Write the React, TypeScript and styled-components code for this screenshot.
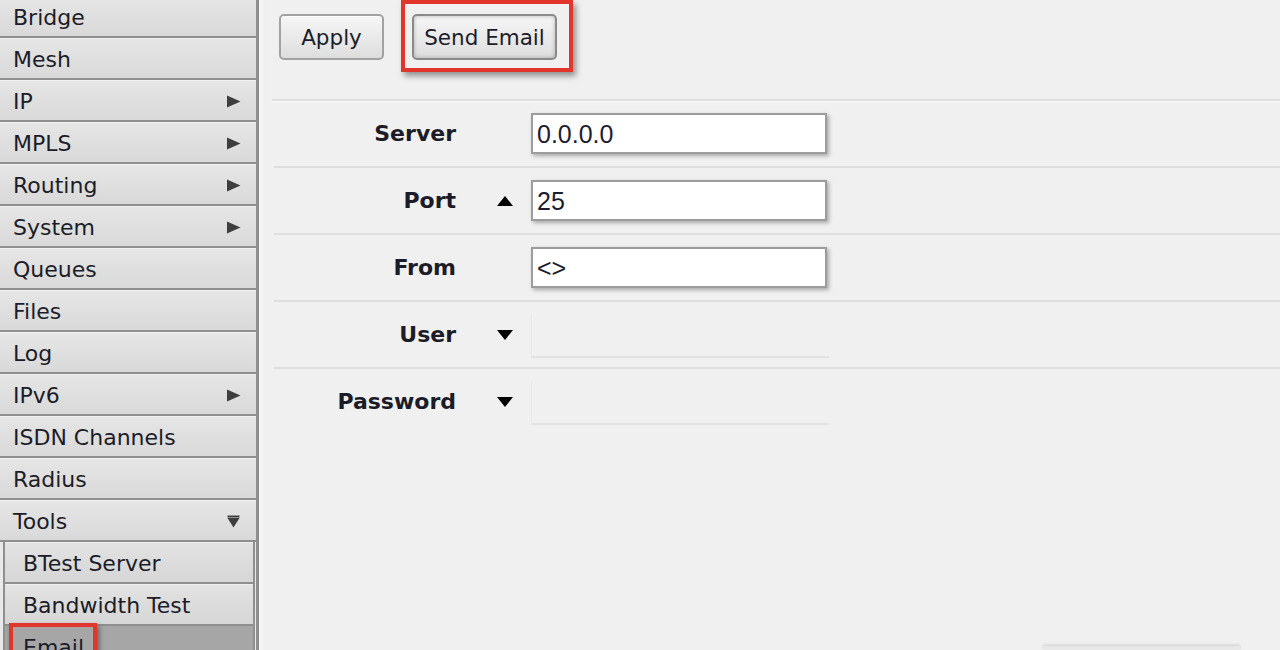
import React from "react";
import styled, { createGlobalStyle } from "styled-components";

const Global = createGlobalStyle`
  html, body { margin: 0; padding: 0; background: #f0f0f0; overflow: hidden; }
  body { font-family: "DejaVu Sans", Verdana, sans-serif; color: #1c1c28; }
`;

const Page = styled.div`
  display: flex;
  width: 1280px;
  height: 650px;
  overflow: hidden;
  background: #f0f0f0;
`;

const Sidebar = styled.nav`
  width: 256px;
  flex: none;
  border-right: 3px solid #8e8e8e;
  background: #e9e9e9;
  display: flex;
  flex-direction: column;
  margin-top: -4px;
`;

const MenuItem = styled.div`
  position: relative;
  height: 42px;
  box-sizing: border-box;
  padding: 3px 15px 0 13px;
  border-bottom: 2px solid #8f8f8f;
  background: linear-gradient(#e6e6e6, #d9d9d9);
  box-shadow: inset 0 1px 0 #f2f2f2;
  display: flex;
  align-items: center;
  justify-content: space-between;
  font-size: 22px;
  line-height: 1;
  flex: none;
  white-space: nowrap;
`;

const SubMenu = styled.div`
  margin: 0 1px 0 3px;
  border-left: 2px solid #8f8f8f;
  border-right: 2px solid #8f8f8f;
  display: flex;
  flex-direction: column;
`;

const SubItem = styled(MenuItem)<{ $active?: boolean }>`
  padding-left: 18px;
  background: ${(p) => (p.$active ? "#a6a6a6" : "linear-gradient(#e3e3e3, #d6d6d6)")};
  box-shadow: ${(p) => (p.$active ? "none" : "inset 0 1px 0 #efefef")};
`;

const Highlight = styled.span`
  position: absolute;
  left: 4px;
  top: -3px;
  width: 80px;
  height: 40px;
  border: 4px solid #e2352b;
  box-shadow: 2px 3px 5px rgba(0, 0, 0, 0.45);
  pointer-events: none;
`;

const Arrow = styled.svg`
  width: 15px;
  height: 13px;
  flex: none;
`;

const Main = styled.main`
  flex: 1;
  display: flex;
  flex-direction: column;
  padding-left: 15px;
  background: #f0f0f0;
  border-left: 3px solid #f5f5f5;
`;

const Toolbar = styled.div`
  display: flex;
  align-items: flex-start;
  height: 99px;
  border-bottom: 2px solid #dedede;
  box-shadow: 0 1px 1px #f8f8f8;
  margin-left: -5px;
  padding-left: 7px;
`;

const Button = styled.button`
  height: 46px;
  padding: 0;
  font-family: "DejaVu Sans", Verdana, sans-serif;
  font-size: 21.5px;
  white-space: nowrap;
  color: #1c1c28;
  background: linear-gradient(#f6f6f6, #dedede);
  border: 2px solid #a2a2a2;
  border-radius: 5px;
  box-shadow: inset 0 1px 0 #ffffff;
  cursor: pointer;
`;

const ApplyButton = styled(Button)`
  width: 105px;
  margin-top: 14px;
`;

const SendButton = styled(Button)`
  width: 145px;
  border-color: #8a8a8a;
  box-shadow: inset 0 0 4px rgba(0, 0, 0, 0.25);
`;

const RedFrame = styled.div`
  margin-left: 17px;
  padding: 10px 12px 8px 7px;
  border: 4px solid #e2352b;
  box-shadow: 3px 4px 6px rgba(0, 0, 0, 0.4);
`;

const Form = styled.div`
  display: flex;
  flex-direction: column;
  margin-left: -3px;
`;

const Row = styled.div<{ $last?: boolean }>`
  height: 65px;
  display: flex;
  align-items: center;
  border-bottom: ${(p) => (p.$last ? "none" : "2px solid #dedede")};
`;

const Label = styled.div`
  width: 182px;
  text-align: right;
  font-weight: bold;
  font-size: 22px;
`;

const Toggle = styled.div`
  width: 75px;
  display: flex;
  justify-content: flex-end;
  padding-right: 18px;
  box-sizing: border-box;
`;

const Input = styled.input`
  width: 296px;
  height: 41px;
  box-sizing: border-box;
  border: 2px solid #9c9c9c;
  background: #fff;
  box-shadow: 2px 2px 4px rgba(0, 0, 0, 0.3);
  padding: 2px 4px 0;
  font-family: "Liberation Sans", Arial, sans-serif;
  font-size: 25px;
  color: #1c1c30;
  outline: none;
`;

const EmptyField = styled.div`
  width: 298px;
  height: 43px;
  box-sizing: border-box;
  border-bottom: 2px solid #e2e2e2;
  border-left: 1px solid #e8e8e8;
  margin-top: 4px;
`;

const Footer = styled.div`
  flex: 1;
  display: flex;
  justify-content: flex-start;
  align-items: flex-end;
  padding-left: 766px;
`;

const FooterBox = styled.div`
  width: 197px;
  height: 4px;
  background: #e8e8e8;
  box-shadow: 0 -1px 3px rgba(0, 0, 0, 0.15);
`;

const RightArrow = () => (
  <Arrow viewBox="0 0 15 13">
    <path d="M1 0.5 L14.5 6.5 L1 12.5 Z" fill="#3e3e3e" />
  </Arrow>
);

const DownArrow = () => (
  <Arrow viewBox="0 0 15 13">
    <path d="M1.5 0.5 H13.5 V2.5 H1.5 Z" fill="#3e3e3e" />
    <path d="M1.5 3 H13.5 L7.5 12.5 Z" fill="#3e3e3e" />
  </Arrow>
);

const Tri = ({ up }: { up?: boolean }) => (
  <svg width="16" height="10" viewBox="0 0 16 10">
    {up ? <path d="M0 10 L8 0 L16 10 Z" fill="#000" /> : <path d="M0 0 L16 0 L8 10 Z" fill="#000" />}
  </svg>
);

const menu: { name: string; arrow?: boolean }[] = [
  { name: "Bridge" },
  { name: "Mesh" },
  { name: "IP", arrow: true },
  { name: "MPLS", arrow: true },
  { name: "Routing", arrow: true },
  { name: "System", arrow: true },
  { name: "Queues" },
  { name: "Files" },
  { name: "Log" },
  { name: "IPv6", arrow: true },
  { name: "ISDN Channels" },
  { name: "Radius" },
];

export default function App() {
  return (
    <>
      <Global />
      <Page>
        <Sidebar>
          {menu.map((m) => (
            <MenuItem key={m.name}>
              <span>{m.name}</span>
              {m.arrow && <RightArrow />}
            </MenuItem>
          ))}
          <MenuItem>
            <span>Tools</span>
            <DownArrow />
          </MenuItem>
          <SubMenu>
            <SubItem>
              <span>BTest Server</span>
            </SubItem>
            <SubItem>
              <span>Bandwidth Test</span>
            </SubItem>
            <SubItem $active>
              <span>Email</span>
              <Highlight />
            </SubItem>
          </SubMenu>
        </Sidebar>
        <Main>
          <Toolbar>
            <ApplyButton>Apply</ApplyButton>
            <RedFrame>
              <SendButton>Send Email</SendButton>
            </RedFrame>
          </Toolbar>
          <Form>
            <Row>
              <Label>Server</Label>
              <Toggle />
              <Input defaultValue="0.0.0.0" />
            </Row>
            <Row>
              <Label>Port</Label>
              <Toggle>
                <Tri up />
              </Toggle>
              <Input defaultValue="25" />
            </Row>
            <Row>
              <Label>From</Label>
              <Toggle />
              <Input defaultValue="<>" />
            </Row>
            <Row>
              <Label>User</Label>
              <Toggle>
                <Tri />
              </Toggle>
              <EmptyField />
            </Row>
            <Row $last>
              <Label>Password</Label>
              <Toggle>
                <Tri />
              </Toggle>
              <EmptyField />
            </Row>
          </Form>
          <Footer>
            <FooterBox />
          </Footer>
        </Main>
      </Page>
    </>
  );
}
